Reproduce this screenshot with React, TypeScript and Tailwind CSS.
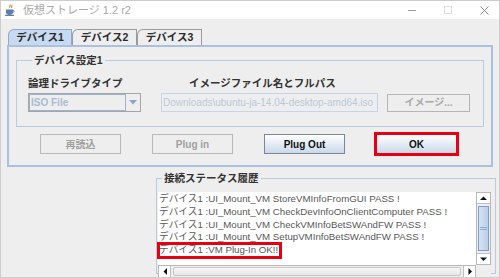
import React from "react";

const tabs = ["デバイス1", "デバイス2", "デバイス3"];

const logLines = [
  "デバイス1 :UI_Mount_VM StoreVMInfoFromGUI PASS !",
  "デバイス1 :UI_Mount_VM CheckDevInfoOnClientComputer PASS !",
  "デバイス1 :UI_Mount_VM CheckVMInfoBetSWAndFW PASS !",
  "デバイス1 :UI_Mount_VM SetupVMInfoBetSWAndFW PASS !",
  "デバイス1 :VM Plug-In OK!!",
];

const JavaIcon = () => (
  <svg width="10" height="12" viewBox="0 0 10 12">
    <path d="M5 0.5c1 1.2-1.2 1.8 0 3.2M6.8 1.2c0.8 1-1 1.4 0 2.6" stroke="#e07a1f" strokeWidth="1.1" fill="none" />
    <path d="M1 5.5h7v2.8c0 1.6-1.4 2.6-3.5 2.6S1 9.9 1 8.3z" fill="#5b7fb0" />
    <path d="M8 6.2c1.6 0 1.6 2 0 2" stroke="#5b7fb0" strokeWidth="0.9" fill="none" />
    <rect x="0" y="10.8" width="9" height="1" fill="#3d5f8f" />
  </svg>
);

const Arrow = ({ dir }: { dir: "up" | "down" | "left" | "right" }) => {
  const pts = {
    up: "1,5 4.5,1.5 8,5",
    down: "1,1.5 4.5,5 8,1.5",
    left: "5,1 1.5,4.5 5,8",
    right: "1.5,1 5,4.5 1.5,8",
  }[dir];
  const horizontal = dir === "left" || dir === "right";
  return (
    <svg width={horizontal ? 6 : 9} height={horizontal ? 9 : 6} viewBox={horizontal ? "0 0 6 9" : "0 0 9 6"}>
      <polygon points={pts} fill="#111" />
    </svg>
  );
};

const GroupBox = ({
  title,
  className,
  children,
}: {
  title: string;
  className?: string;
  children: React.ReactNode;
}) => (
  <fieldset className={`border border-[#b9cbe0] ${className ?? ""}`}>
    <legend className="ml-[4px] px-[2px] text-[10.5px] font-bold leading-[13px] text-[#333]">
      {title}
    </legend>
    {children}
  </fieldset>
);

const btnBase =
  "w-[81px] h-[20px] text-[10px] font-bold flex items-center justify-center border";
const btnDisabled = `${btnBase} border-[#b8b8b8] bg-[#eeeeee] text-[#a0a0a0]`;
const btnActive = `${btnBase} border-[#7a8797] bg-gradient-to-b from-white to-[#c9d9ea] text-[#111]`;

export default function App() {
  return (
    <div className="w-[500px] h-[278px] bg-[#eeeeee] border border-[#cdcdcd] flex flex-col overflow-hidden font-['Liberation_Sans','Noto_Sans_CJK_JP',sans-serif]">
      {/* title bar */}
      <div className="h-[18px] bg-white flex items-center pl-[4px]">
        <JavaIcon />
        <span className="ml-[8px] text-[11px] text-[#a8a8a8]">仮想ストレージ 1.2 r2</span>
        <div className="ml-auto flex items-center">
          <div className="w-[8px] h-px bg-[#9a9a9a] mt-[1px]" />
          <div className="ml-[28px] w-[8px] h-[8px] border border-[#dedede]" />
          <svg className="ml-[28px] mr-[10px]" width="9" height="9" viewBox="0 0 9 9">
            <path d="M0.5 0.5l8 8M8.5 0.5l-8 8" stroke="#8a8a8a" strokeWidth="1" />
          </svg>
        </div>
      </div>

      {/* tabs */}
      <div className="pt-[10px] pl-[6px] pr-[6px]">
        <div className="flex pl-[1px]">
          {tabs.map((t, i) => (
            <div
              key={t}
              className={`h-[16px] flex items-center justify-center border border-b-0 rounded-tl-[6px] text-[10.5px] font-bold text-[#2a2a2a] ${
                i === 0
                  ? "w-[64px] bg-[#c6dbf1] border-[#8ea9cc]"
                  : "w-[65px] bg-[#eeeeee] border-[#9a9a9a]"
              }`}
            >
              {t}
            </div>
          ))}
        </div>

        {/* tab panel */}
        <div className="border-2 border-[#a9c1de] h-[122px] px-[7px] pt-[7px]">
          <GroupBox title="デバイス設定1" className="h-[73px] px-[11px]">
            <div className="flex text-[10.5px] font-bold text-[#333] leading-[13px] pt-[10px]">
              <span className="w-[133px]">論理ドライブタイプ</span>
              <span className="ml-[28px]">イメージファイル名とフルパス</span>
            </div>
            <div className="flex items-center mt-[3px]">
              {/* combo box */}
              <div className="w-[113px] h-[19px] flex border border-[#a5a5a5] bg-[#eeeeee]">
                <div className="flex-1 border border-[#9db4d0] flex items-center pl-[1px] text-[10px] font-bold text-[#a9bbd0]">
                  ISO File
                </div>
                <div className="w-[14px] flex items-center justify-center">
                  <svg width="8" height="5" viewBox="0 0 8 5">
                    <polygon points="0,0 8,0 4,4.5" fill="#8aa6c8" />
                  </svg>
                </div>
              </div>
              {/* path field */}
              <div className="ml-[20px] w-[217px] h-[19px] border border-[#c5d5e8] flex items-center pl-[1px] text-[10px] text-[#b9c9dc] overflow-hidden whitespace-nowrap">
                Downloads\ubuntu-ja-14.04-desktop-amd64.iso
              </div>
              <div className="ml-[9px] w-[83px] h-[18px] border border-[#b5b5b5] flex items-center justify-center text-[10px] font-bold text-[#a8a8a8]">
                イメージ...
              </div>
            </div>
          </GroupBox>

          <div className="flex gap-[31px] pl-[24px] mt-[7px]">
            <button className={btnDisabled}>再読込</button>
            <button className={btnDisabled}>Plug in</button>
            <button className={btnActive}>Plug Out</button>
            <button className={`${btnActive} outline-[3px] outline-[#e60012] -outline-offset-1`}>OK</button>
          </div>
        </div>
      </div>

      {/* status history */}
      <div className="pl-[155px] pr-[3px] mt-[5px]">
        <GroupBox title="接続ステータス履歴" className="h-[102px] px-px pt-[7px]">
          <div className="grid grid-cols-[318px_15px] grid-rows-[73px_13px]">
            <div className="bg-white text-[9.7px] leading-[12.75px] text-[#585858] pt-px pl-px whitespace-nowrap">
              {logLines.map((l, i) => (
                <div key={i}>
                  {i === logLines.length - 1 ? (
                    <span className="inline-block pr-[2px] outline-[3px] outline-[#e60012] outline-offset-[-1px]">
                      {l}
                    </span>
                  ) : (
                    l
                  )}
                </div>
              ))}
            </div>
            {/* vertical scrollbar */}
            <div className="bg-[#eeeeee] border border-[#b8b8b8] flex flex-col items-stretch">
              <div className="h-[11px] flex items-center justify-center bg-white border-b border-[#c0c0c0]">
                <Arrow dir="up" />
              </div>
              <div className="flex-1 mx-px my-[2px] bg-gradient-to-r from-[#d6e4f3] to-[#b9cfe8] border border-[#7f9cc6] flex items-center justify-center">
                <div className="w-[7px] h-[3px] border-y border-[#8fa9d0]" />
              </div>
              <div className="h-[11px] flex items-center justify-center bg-white border-t border-[#c0c0c0]">
                <Arrow dir="down" />
              </div>
            </div>
            {/* horizontal scrollbar */}
            <div className="bg-[#eeeeee] border border-[#b8b8b8] flex items-stretch">
              <div className="w-[12px] flex items-center justify-center bg-white border-r border-[#c0c0c0]">
                <Arrow dir="left" />
              </div>
              <div className="flex-1 mx-[2px] my-px bg-gradient-to-b from-[#f7f7f7] to-[#e6e6e6] border border-[#c7c7c7] rounded-[2px]" />
              <div className="w-[12px] flex items-center justify-center bg-white border-l border-[#c0c0c0]">
                <Arrow dir="right" />
              </div>
            </div>
            <div className="bg-[#eeeeee]" />
          </div>
        </GroupBox>
      </div>
    </div>
  );
}
